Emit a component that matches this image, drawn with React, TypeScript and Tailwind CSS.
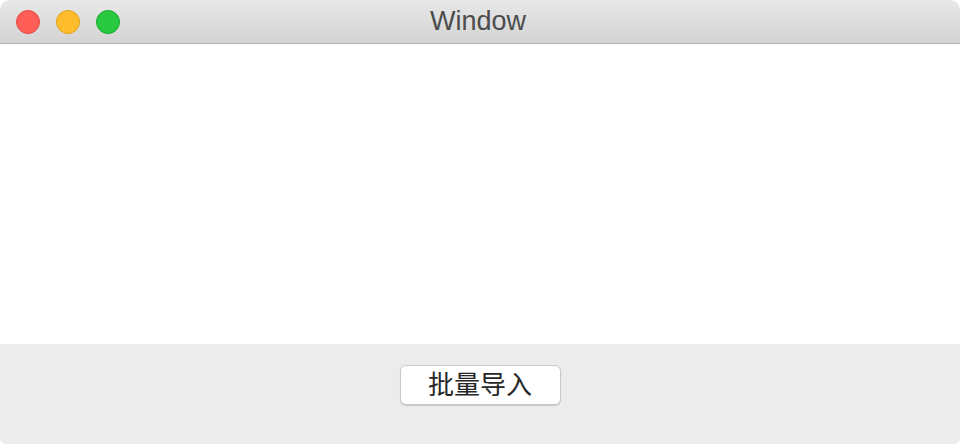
import React from "react";

const lights = [
  { id: "close", fill: "bg-[#ff5f57]", border: "border-[#e2463f]" },
  { id: "min", fill: "bg-[#ffbd2e]", border: "border-[#e1a116]" },
  { id: "max", fill: "bg-[#28c940]", border: "border-[#12ac28]" },
];

const App = () => {
  return (
    <div className="flex h-[444px] w-[960px] flex-col overflow-hidden rounded-t-[10px] rounded-b-[6px] bg-white font-['Helvetica_Neue','Liberation_Sans','Noto_Sans_CJK_SC',sans-serif]">
      {/* Title bar */}
      <div className="relative flex h-[44px] shrink-0 items-center border-b border-[#b1b1b1] bg-gradient-to-b from-[#e8e8e8] to-[#d3d3d3]">
        <div className="flex gap-4 pl-4">
          {lights.map((l) => (
            <span
              key={l.id}
              className={`h-6 w-6 rounded-full border ${l.fill} ${l.border}`}
            />
          ))}
        </div>
        <div className="absolute inset-0 flex items-center justify-center text-[27px] text-[#4c4c4c]">
          <span className="ml-[-4px]">Window</span>
        </div>
      </div>

      {/* Content */}
      <div className="flex-1 bg-white" />

      {/* Bottom bar */}
      <div className="flex h-[100px] shrink-0 justify-center bg-[#ececec] pt-[21px]">
        <button className="h-[40px] w-[161px] rounded-[6px] border border-[#c8c8c8] bg-white text-[26px] leading-none text-[#262626] shadow-[0_1px_1px_rgba(0,0,0,0.15)]">
          批量导入
        </button>
      </div>
    </div>
  );
};

export default App;
